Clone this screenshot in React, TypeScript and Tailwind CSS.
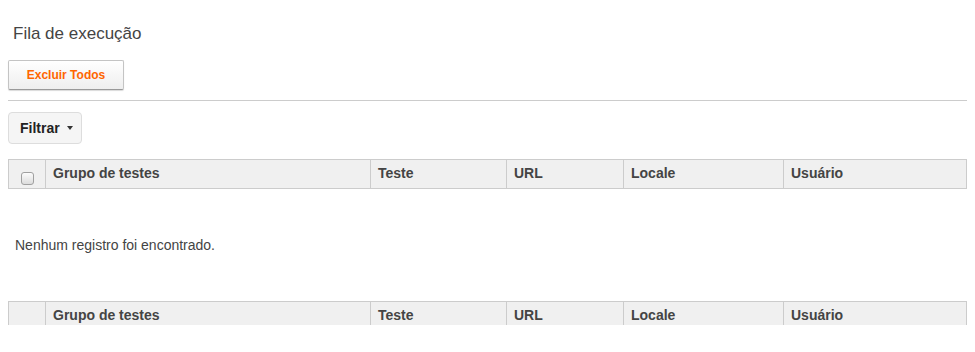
import React from "react";

const columns = [
  { label: "Grupo de testes", w: "w-[325px]" },
  { label: "Teste", w: "w-[136px]" },
  { label: "URL", w: "w-[117px]" },
  { label: "Locale", w: "w-[160px]" },
  { label: "Usuário", w: "flex-1" },
];

const HeaderRow = ({ checkbox }: { checkbox?: boolean }) => (
  <div className="flex h-[30px] border border-[#cccccc] bg-[#f0f0f0] text-[14px] font-bold text-[#444]">
    <div className="flex w-[37px] shrink-0 items-end justify-center border-r border-[#cccccc] pb-[3px]">
      {checkbox && (
        <span className="block h-[13px] w-[13px] rounded-[3px] border border-[#a0a0a0] bg-gradient-to-b from-[#fcfcfc] to-[#dcdcdc]" />
      )}
    </div>
    {columns.map((c, i) => (
      <div
        key={c.label}
        className={`${c.w} shrink-0 px-[7px] pt-[4px] leading-[18px] ${
          i < columns.length - 1 ? "border-r border-[#cccccc]" : ""
        }`}
      >
        {c.label}
      </div>
    ))}
  </div>
);

export default function App() {
  return (
    <div
      className="h-[325px] overflow-hidden bg-white px-[8px] text-[#444]"
      style={{ fontFamily: '"Liberation Sans", Arial, sans-serif' }}
    >
      <h1 className="pl-[5px] pt-[24px] text-[17px] font-normal leading-[20px] text-[#444]">
        Fila de execução
      </h1>
      <button className="mt-[16px] h-[30px] w-[116px] rounded-[2px] border border-[#c4c4c4] border-b-[#999] bg-gradient-to-b from-white to-[#eeeeee] text-[12px] font-bold text-[#ff6600] shadow-[0_1px_1px_rgba(0,0,0,0.15)]">
        Excluir Todos
      </button>
      <div className="mt-[10px] h-px w-[959px] bg-[#cccccc]" />
      <button className="mt-[11px] flex h-[32px] w-[74px] items-center gap-[7px] rounded-[4px] border border-[#dddddd] bg-[#f5f5f5] pl-[11px] text-[14px] font-bold text-[#222]">
        Filtrar
        <svg width="6" height="4" viewBox="0 0 6 4">
          <path d="M0 0h6L3 4z" fill="#333" />
        </svg>
      </button>
      <div className="mt-[15px] w-[959px]">
        <HeaderRow checkbox />
      </div>
      <p className="mt-[47px] pl-[7px] text-[14px] leading-[18px] text-[#444]">
        Nenhum registro foi encontrado.
      </p>
      <div className="mt-[47px] w-[959px]">
        <HeaderRow />
      </div>
    </div>
  );
}
